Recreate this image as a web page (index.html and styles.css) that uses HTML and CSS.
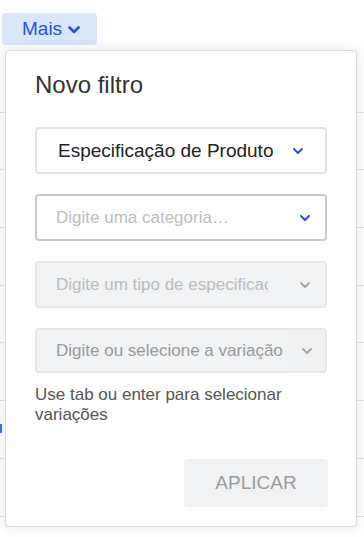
FILE: index.html
```html
<!DOCTYPE html>
<html lang="pt-BR">
<head>
<meta charset="utf-8">
<title>Novo filtro</title>
<link rel="stylesheet" href="styles.css">
</head>
<body>
<div class="page">
  <div class="toolbar">
    <button class="more-btn" type="button">Mais
      <svg class="more-chev" viewBox="0 0 12 8" width="12" height="8"><path d="M1.5 1.5 L6 6 L10.5 1.5" fill="none" stroke="currentColor" stroke-width="2.6" stroke-linecap="round" stroke-linejoin="round"/></svg>
    </button>
  </div>
  <div class="rows">
    <div class="row"></div>
    <div class="row"></div>
    <div class="row"></div>
    <div class="row"></div>
    <div class="row"></div>
    <div class="row"></div>
    <div class="row"><span class="row-mark"></span></div>
    <div class="row"></div>
  </div>

  <div class="popup">
    <h2 class="popup-title">Novo filtro</h2>
    <div class="fields">
      <div class="select select-filled">
        <span class="select-text">Especificação de Produto</span>
        <svg class="chev chev-blue" viewBox="0 0 10 6" width="10" height="6"><path d="M1 1 L5 5 L9 1" fill="none" stroke="currentColor" stroke-width="2" stroke-linecap="round" stroke-linejoin="round"/></svg>
      </div>
      <div class="select select-active">
        <span class="select-placeholder">Digite uma categoria…</span>
        <svg class="chev chev-blue" viewBox="0 0 10 6" width="10" height="6"><path d="M1 1 L5 5 L9 1" fill="none" stroke="currentColor" stroke-width="2" stroke-linecap="round" stroke-linejoin="round"/></svg>
      </div>
      <div class="select select-disabled">
        <span class="select-placeholder clip">Digite um tipo de especificação</span>
        <svg class="chev chev-gray" viewBox="0 0 10 6" width="10" height="6"><path d="M1 1 L5 5 L9 1" fill="none" stroke="currentColor" stroke-width="1.8" stroke-linecap="round" stroke-linejoin="round"/></svg>
      </div>
      <div class="select select-disabled select-split">
        <span class="select-placeholder dark">Digite ou selecione a variação</span>
        <span class="select-addon">
          <svg class="chev chev-gray" viewBox="0 0 10 6" width="10" height="6"><path d="M1 1 L5 5 L9 1" fill="none" stroke="currentColor" stroke-width="1.8" stroke-linecap="round" stroke-linejoin="round"/></svg>
        </span>
      </div>
    </div>
    <p class="hint">Use tab ou enter para selecionar variações</p>
    <div class="actions">
      <button class="apply-btn" type="button" disabled>APLICAR</button>
    </div>
  </div>
</div>
</body>
</html>
```

FILE: styles.css
```css
html, body {
  margin: 0;
  padding: 0;
  background: #ffffff;
}

body {
  font-family: "Liberation Sans", Arial, sans-serif;
  width: 364px;
  height: 537px;
  overflow: hidden;
}

.page {
  position: relative;
  width: 364px;
  height: 537px;
  overflow: hidden;
}

.toolbar {
  padding: 13px 0 0 2px;
  height: 32px;
}

.more-btn {
  display: flex;
  align-items: center;
  gap: 6px;
  box-sizing: border-box;
  width: 95px;
  height: 32px;
  padding: 0 0 0 20px;
  border: none;
  border-radius: 4px;
  background: #dae7fa;
  color: #2850d6;
  font-family: "Liberation Sans", Arial, sans-serif;
  font-size: 19px;
  line-height: 32px;
}

.more-chev {
  display: block;
  margin-top: 1px;
}

.rows {
  margin-top: 10px;
}

.row {
  box-sizing: border-box;
  height: 57.7px;
  border-bottom: 1px solid #e4e4e4;
  position: relative;
}

.row-mark {
  position: absolute;
  left: 0;
  top: 23px;
  width: 2px;
  height: 9px;
  background: #2a7ad8;
}

.popup {
  position: absolute;
  left: 5px;
  top: 50px;
  width: 352px;
  height: 477px;
  box-sizing: border-box;
  padding: 20px 29px 19px 29px;
  background: #ffffff;
  border: 1px solid #dcdcdc;
  border-radius: 4px;
  box-shadow: 0 0 14px rgba(0, 0, 0, 0.10);
  display: flex;
  flex-direction: column;
}

.popup-title {
  margin: 0;
  font-size: 24px;
  font-weight: normal;
  line-height: 28px;
  color: #333333;
}

.fields {
  margin-top: 28px;
  display: flex;
  flex-direction: column;
  gap: 20px;
}

.select {
  box-sizing: border-box;
  height: 47px;
  border: 2px solid #e4e4e4;
  border-radius: 4px;
  display: flex;
  align-items: center;
  padding: 0 15px 0 19px;
  background: #ffffff;
  overflow: hidden;
}

.select-text {
  flex: 1;
  font-size: 19px;
  color: #222222;
  padding-left: 2px;
  white-space: nowrap;
}

.select-placeholder {
  flex: 1;
  font-size: 17px;
  color: #bdbdbd;
  white-space: nowrap;
  overflow: hidden;
}

.select-placeholder.clip {
  flex: none;
  width: 212px;
  margin-right: auto;
  color: #bbbbbb;
}

.select-placeholder.dark {
  color: #999999;
}

.chev {
  display: block;
  flex: none;
}

.select-filled .chev {
  margin-right: 7px;
}

.chev-blue {
  color: #2356d8;
}

.chev-gray {
  color: #a2a2a2;
}

.select-active {
  border-color: #c9c9c9;
}

.select-disabled {
  background: #f2f3f5;
  border-color: #e6e7e9;
}

.select-split {
  height: 45px;
  padding-right: 0;
}

.select-addon {
  flex: none;
  width: 37px;
  height: 100%;
  display: flex;
  align-items: center;
  justify-content: center;
  background: #f0f1f3;
}

.hint {
  margin: 12px 0 0 0;
  font-size: 17px;
  line-height: 20px;
  color: #555555;
}

.actions {
  margin-top: auto;
  display: flex;
  justify-content: flex-end;
}

.apply-btn {
  width: 144px;
  height: 48px;
  margin-right: -1px;
  border: none;
  border-radius: 4px;
  background: #f1f2f4;
  color: #9b9b9b;
  font-family: "Liberation Sans", Arial, sans-serif;
  font-size: 19px;
}
```
